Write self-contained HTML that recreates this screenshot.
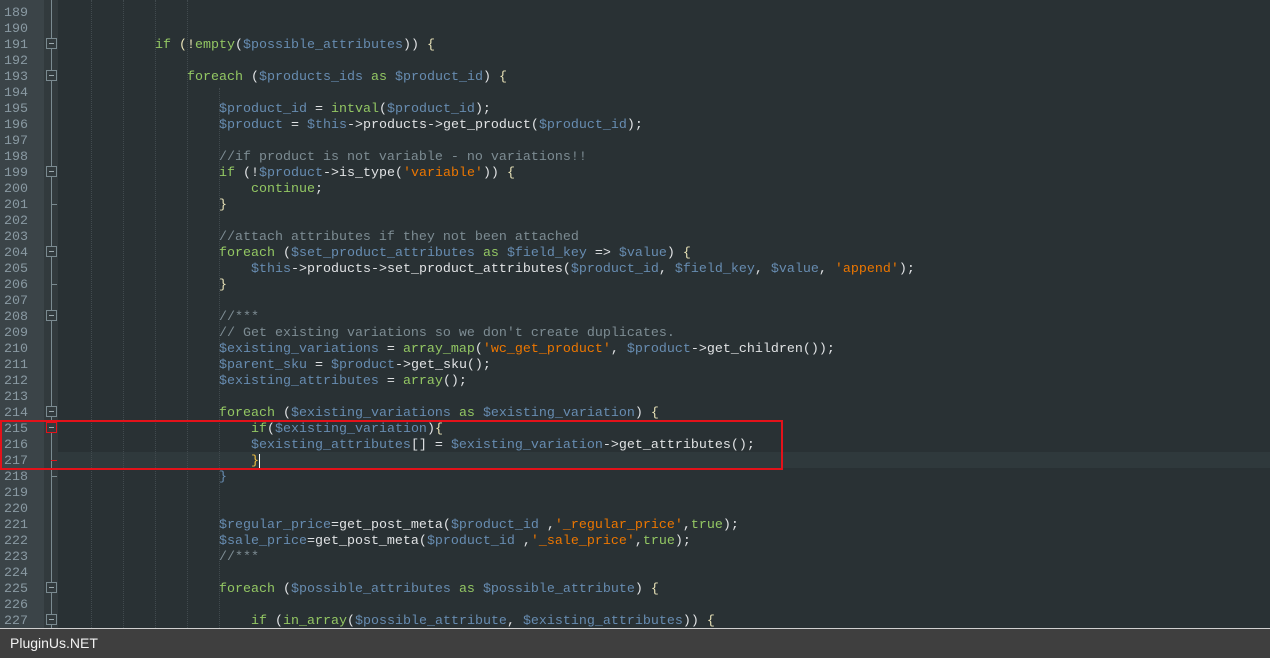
<!DOCTYPE html>
<html><head><meta charset="utf-8"><style>
body{margin:0;width:1270px;height:658px;overflow:hidden;background:#293134;position:relative;font-family:"Liberation Mono",monospace;}
#gut{position:absolute;left:0;top:0;width:44px;height:628px;background:#3b4448;}
#fold{position:absolute;left:44px;top:0;width:14px;height:628px;background:#323a3d;}
#fl{position:absolute;left:51px;top:0;width:1px;height:628px;background:#7a8a90;}
.ln{position:absolute;left:4px;font-size:13.33px;color:#8a9aa3;line-height:16px;transform:translateY(2px);}
.cl{position:absolute;left:59px;font-size:13.33px;line-height:16px;white-space:pre;color:#e0e2e4;transform:translateY(2px);}
.g{position:absolute;top:0;height:628px;width:0;border-left:1px dotted #414a4e;}
.bx{position:absolute;left:46px;width:9px;height:9px;border:1px solid #7a8a90;background:#323a3d;}
.bx:after{content:"";position:absolute;left:2px;top:4px;width:5px;height:1px;background:#9aa8ad;}
.tk{position:absolute;left:51px;width:6px;height:1px;background:#7a8a90;}
.k{color:#93c763}.v{color:#678cb1}.s{color:#ec7600}.c{color:#7d8c93}.b{color:#e8e2b7}
#cur{position:absolute;left:58px;top:452px;width:1212px;height:16px;background:#2f393c;}
#box{position:absolute;left:0;top:420px;width:779px;height:46px;border:2px solid #e3121a;}
#bar{position:absolute;left:0;top:628px;width:1270px;height:30px;background:#3f3f3f;border-top:1px solid #d0d0d0;box-sizing:border-box;}
#bar span{position:absolute;left:10px;top:6px;font-family:"Liberation Sans",sans-serif;font-size:14px;color:#f2f2f2;}
</style></head><body>
<div id="gut"></div><div id="fold"></div><div id="fl"></div>
<div id="cur"></div>
<div class="g" style="left:91px"></div><div class="g" style="left:123px"></div><div class="g" style="left:155px"></div><div class="g" style="left:187px"></div><div class="g" style="left:219px;top:88px;height:540px"></div>
<div class="ln" style="top:4px">189</div><div class="ln" style="top:20px">190</div><div class="ln" style="top:36px">191</div><div class="ln" style="top:52px">192</div><div class="ln" style="top:68px">193</div><div class="ln" style="top:84px">194</div><div class="ln" style="top:100px">195</div><div class="ln" style="top:116px">196</div><div class="ln" style="top:132px">197</div><div class="ln" style="top:148px">198</div><div class="ln" style="top:164px">199</div><div class="ln" style="top:180px">200</div><div class="ln" style="top:196px">201</div><div class="ln" style="top:212px">202</div><div class="ln" style="top:228px">203</div><div class="ln" style="top:244px">204</div><div class="ln" style="top:260px">205</div><div class="ln" style="top:276px">206</div><div class="ln" style="top:292px">207</div><div class="ln" style="top:308px">208</div><div class="ln" style="top:324px">209</div><div class="ln" style="top:340px">210</div><div class="ln" style="top:356px">211</div><div class="ln" style="top:372px">212</div><div class="ln" style="top:388px">213</div><div class="ln" style="top:404px">214</div><div class="ln" style="top:420px">215</div><div class="ln" style="top:436px">216</div><div class="ln" style="top:452px">217</div><div class="ln" style="top:468px">218</div><div class="ln" style="top:484px">219</div><div class="ln" style="top:500px">220</div><div class="ln" style="top:516px">221</div><div class="ln" style="top:532px">222</div><div class="ln" style="top:548px">223</div><div class="ln" style="top:564px">224</div><div class="ln" style="top:580px">225</div><div class="ln" style="top:596px">226</div><div class="ln" style="top:612px">227</div>
<div class="bx" style="top:38px"></div><div class="bx" style="top:70px"></div><div class="bx" style="top:166px"></div><div class="tk" style="top:204px"></div><div class="bx" style="top:246px"></div><div class="tk" style="top:284px"></div><div class="bx" style="top:310px"></div><div class="bx" style="top:406px"></div><div class="bx" style="top:422px;border-color:#e3121a"></div><div class="tk" style="top:460px;background:#e3121a"></div><div class="tk" style="top:476px"></div><div class="bx" style="top:582px"></div><div class="bx" style="top:614px"></div>
<div class="cl" style="top:36px">            <span class="k">if</span> <span class="b">(!</span><span class="k">empty</span>(<span class="v">$possible_attributes</span>)) <span class="b">{</span></div>
<div class="cl" style="top:68px">                <span class="k">foreach</span> (<span class="v">$products_ids</span> <span class="k">as</span> <span class="v">$product_id</span>) <span class="b">{</span></div>
<div class="cl" style="top:100px">                    <span class="v">$product_id</span> = <span class="k">intval</span>(<span class="v">$product_id</span>);</div>
<div class="cl" style="top:116px">                    <span class="v">$product</span> = <span class="v">$this</span>-&gt;products-&gt;get_product(<span class="v">$product_id</span>);</div>
<div class="cl" style="top:148px">                    <span class="c">//if product is not variable - no variations!!</span></div>
<div class="cl" style="top:164px">                    <span class="k">if</span> (!<span class="v">$product</span>-&gt;is_type(<span class="s">'variable'</span>)) <span class="b">{</span></div>
<div class="cl" style="top:180px">                        <span class="k">continue</span>;</div>
<div class="cl" style="top:196px">                    <span class="b">}</span></div>
<div class="cl" style="top:228px">                    <span class="c">//attach attributes if they not been attached</span></div>
<div class="cl" style="top:244px">                    <span class="k">foreach</span> (<span class="v">$set_product_attributes</span> <span class="k">as</span> <span class="v">$field_key</span> =&gt; <span class="v">$value</span>) <span class="b">{</span></div>
<div class="cl" style="top:260px">                        <span class="v">$this</span>-&gt;products-&gt;set_product_attributes(<span class="v">$product_id</span>, <span class="v">$field_key</span>, <span class="v">$value</span>, <span class="s">'append'</span>);</div>
<div class="cl" style="top:276px">                    <span class="b">}</span></div>
<div class="cl" style="top:308px">                    <span class="c">//***</span></div>
<div class="cl" style="top:324px">                    <span class="c">// Get existing variations so we don't create duplicates.</span></div>
<div class="cl" style="top:340px">                    <span class="v">$existing_variations</span> = <span class="k">array_map</span>(<span class="s">'wc_get_product'</span>, <span class="v">$product</span>-&gt;get_children());</div>
<div class="cl" style="top:356px">                    <span class="v">$parent_sku</span> = <span class="v">$product</span>-&gt;get_sku();</div>
<div class="cl" style="top:372px">                    <span class="v">$existing_attributes</span> = <span class="k">array</span>();</div>
<div class="cl" style="top:404px">                    <span class="k">foreach</span> (<span class="v">$existing_variations</span> <span class="k">as</span> <span class="v">$existing_variation</span>) <span class="b">{</span></div>
<div class="cl" style="top:420px">                        <span class="k">if</span>(<span class="v">$existing_variation</span>)<span class="b">{</span></div>
<div class="cl" style="top:436px">                        <span class="v">$existing_attributes</span>[] = <span class="v">$existing_variation</span>-&gt;get_attributes();</div>
<div class="cl" style="top:452px">                        <span style="color:#f0c040">}</span><span style="border-left:1px solid #fff"></span></div>
<div class="cl" style="top:468px">                    <span class="v">}</span></div>
<div class="cl" style="top:516px">                    <span class="v">$regular_price</span>=get_post_meta(<span class="v">$product_id</span> ,<span class="s">'_regular_price'</span>,<span class="k">true</span>);</div>
<div class="cl" style="top:532px">                    <span class="v">$sale_price</span>=get_post_meta(<span class="v">$product_id</span> ,<span class="s">'_sale_price'</span>,<span class="k">true</span>);</div>
<div class="cl" style="top:548px">                    <span class="c">//***</span></div>
<div class="cl" style="top:580px">                    <span class="k">foreach</span> (<span class="v">$possible_attributes</span> <span class="k">as</span> <span class="v">$possible_attribute</span>) <span class="b">{</span></div>
<div class="cl" style="top:612px">                        <span class="k">if</span> (<span class="k">in_array</span>(<span class="v">$possible_attribute</span>, <span class="v">$existing_attributes</span>)) <span class="b">{</span></div>
<div id="box"></div>
<div id="bar"><span>PluginUs.NET</span></div>
</body></html>
